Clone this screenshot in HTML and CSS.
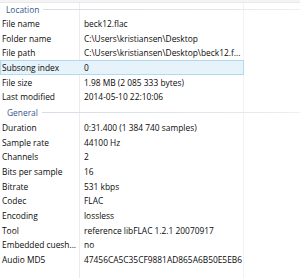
FILE: index.html
```html
<!DOCTYPE html>
<html>
<head>
<meta charset="utf-8">
<link rel="stylesheet" href="styles.css">
</head>
<body>
<div class="list">
  <div class="topstrip"></div>
  <div class="group first"><span class="gtitle">Location</span><span class="gline"></span></div>
  <div class="row"><span class="name">File name</span><span class="val">beck12.flac</span></div>
  <div class="row"><span class="name">Folder name</span><span class="val">C:\Users\kristiansen\Desktop</span></div>
  <div class="row"><span class="name">File path</span><span class="val">C:\Users\kristiansen\Desktop\beck12.f...</span></div>
  <div class="row focus"><span class="name">Subsong index</span><span class="val">0</span></div>
  <div class="row"><span class="name">File size</span><span class="val">1.98 MB (2 085 333 bytes)</span></div>
  <div class="row"><span class="name">Last modified</span><span class="val">2014-05-10 22:10:06</span></div>
  <div class="group"><span class="gtitle">General</span><span class="gline"></span></div>
  <div class="row"><span class="name">Duration</span><span class="val">0:31.400 (1 384 740 samples)</span></div>
  <div class="row"><span class="name">Sample rate</span><span class="val">44100 Hz</span></div>
  <div class="row"><span class="name">Channels</span><span class="val">2</span></div>
  <div class="row"><span class="name">Bits per sample</span><span class="val">16</span></div>
  <div class="row"><span class="name">Bitrate</span><span class="val">531 kbps</span></div>
  <div class="row"><span class="name">Codec</span><span class="val">FLAC</span></div>
  <div class="row"><span class="name">Encoding</span><span class="val">lossless</span></div>
  <div class="row"><span class="name">Tool</span><span class="val">reference libFLAC 1.2.1 20070917</span></div>
  <div class="row"><span class="name">Embedded cuesh...</span><span class="val">no</span></div>
  <div class="row"><span class="name">Audio MD5</span><span class="val">47456CA5C35CF9881AD865A6B50E5EB6</span></div>
</div>
</body>
</html>
```
FILE: styles.css
```css
html, body {
  margin: 0;
  padding: 0;
  background: #ffffff;
}
body {
  width: 300px;
  height: 278px;
  overflow: hidden;
  font-family: "Open Sans", "Noto Sans", sans-serif;
  font-size: 8.4px;
  color: #0a0a0a;
}
.list {
  display: flex;
  flex-direction: column;
  height: 278px;
  background:
    linear-gradient(#ececec, #ececec) 79px 0 / 1px 100% no-repeat,
    linear-gradient(#f2f2f2, #f2f2f2) 243px 0 / 1px 100% no-repeat,
    #ffffff;
}
.topstrip {
  height: 2px;
  background: #f4f4f4;
  border-bottom: 1px solid #e8e8e8;
  flex: none;
}
.group {
  display: flex;
  align-items: center;
  height: 16.2px;
  flex: none;
  padding-left: 7px;
  gap: 4px;
}
.group.first {
  height: 13.2px;
  padding-left: 6px;
}
.gtitle {
  color: #35578e;
  white-space: nowrap;
}
.gline {
  flex: 1;
  height: 1px;
  background: linear-gradient(to right, #d6dde7, #e2e7ed 70%, #eceff3);
}
.row {
  display: grid;
  grid-template-columns: 82px 162px;
  height: 14.65px;
  align-items: center;
  flex: none;
  box-sizing: border-box;
  white-space: nowrap;
}
.name {
  padding-left: 2px;
  overflow: hidden;
}
.val {
  overflow: hidden;
  padding-left: 2px;
}
.row.focus {
  width: 244px;
  background: #e6f3fb;
  border: 1px solid #b4d9ee;
}
.row.focus .name {
  padding-left: 1px;
}
.row.focus .val {
  margin-left: -1px;
}
```
